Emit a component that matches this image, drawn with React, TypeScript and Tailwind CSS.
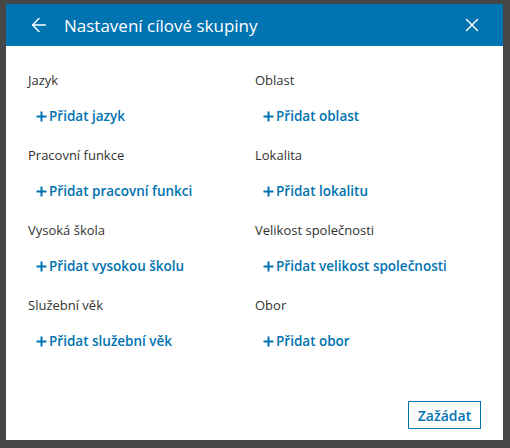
import { ArrowLeft, X } from 'lucide-react';

const fields = [
  { label: 'Jazyk', action: 'Přidat jazyk' },
  { label: 'Oblast', action: 'Přidat oblast' },
  { label: 'Pracovní funkce', action: 'Přidat pracovní funkci' },
  { label: 'Lokalita', action: 'Přidat lokalitu' },
  { label: 'Vysoká škola', action: 'Přidat vysokou školu' },
  { label: 'Velikost společnosti', action: 'Přidat velikost společnosti' },
  { label: 'Služební věk', action: 'Přidat služební věk' },
  { label: 'Obor', action: 'Přidat obor' },
];

function Field({ label, action }: { label: string; action: string }) {
  return (
    <div className="flex h-[56px] flex-col">
      <div className="h-5 text-[13px] leading-5 text-[#333333]">{label}</div>
      <button className="mt-4 flex h-5 items-center pl-2 text-left text-[13.5px] font-semibold leading-5 text-[#0073b1]">
        <svg width="11" height="11" viewBox="0 0 11 11" className="mr-[2px]">
          <path d="M5.5 0.5v10M0.5 5.5h10" stroke="currentColor" strokeWidth="2" />
        </svg>
        {action}
      </button>
    </div>
  );
}

export default function App() {
  return (
    <div className="h-[448px] w-[510px] bg-[#464646] pl-[6px] pt-[4px]" style={{ fontFamily: '"Open Sans", "Noto Sans", sans-serif' }}>
      <div className="flex h-[436px] w-[497px] flex-col bg-white">
        {/* header */}
        <div className="flex h-[42px] items-center bg-[#0073b1] pl-[22px] pr-[20px] text-white">
          <ArrowLeft size={22} strokeWidth={1.6} />
          <h1 className="ml-[14px] flex-1 text-[17px] leading-none">Nastavení cílové skupiny</h1>
          <X size={22} strokeWidth={1.6} />
        </div>

        {/* fields */}
        <div className="grid grid-cols-[227px_1fr] gap-y-[19px] pl-[22px] pt-[24px]">
          {fields.map((f) => (
            <Field key={f.label} label={f.label} action={f.action} />
          ))}
        </div>

        <div className="mt-auto flex justify-end pb-[11px] pr-[22px]">
          <button className="h-[28px] w-[73px] border border-[#0073b1] text-[14px] font-semibold text-[#0073b1]">
            Zažádat
          </button>
        </div>
      </div>
    </div>
  );
}
